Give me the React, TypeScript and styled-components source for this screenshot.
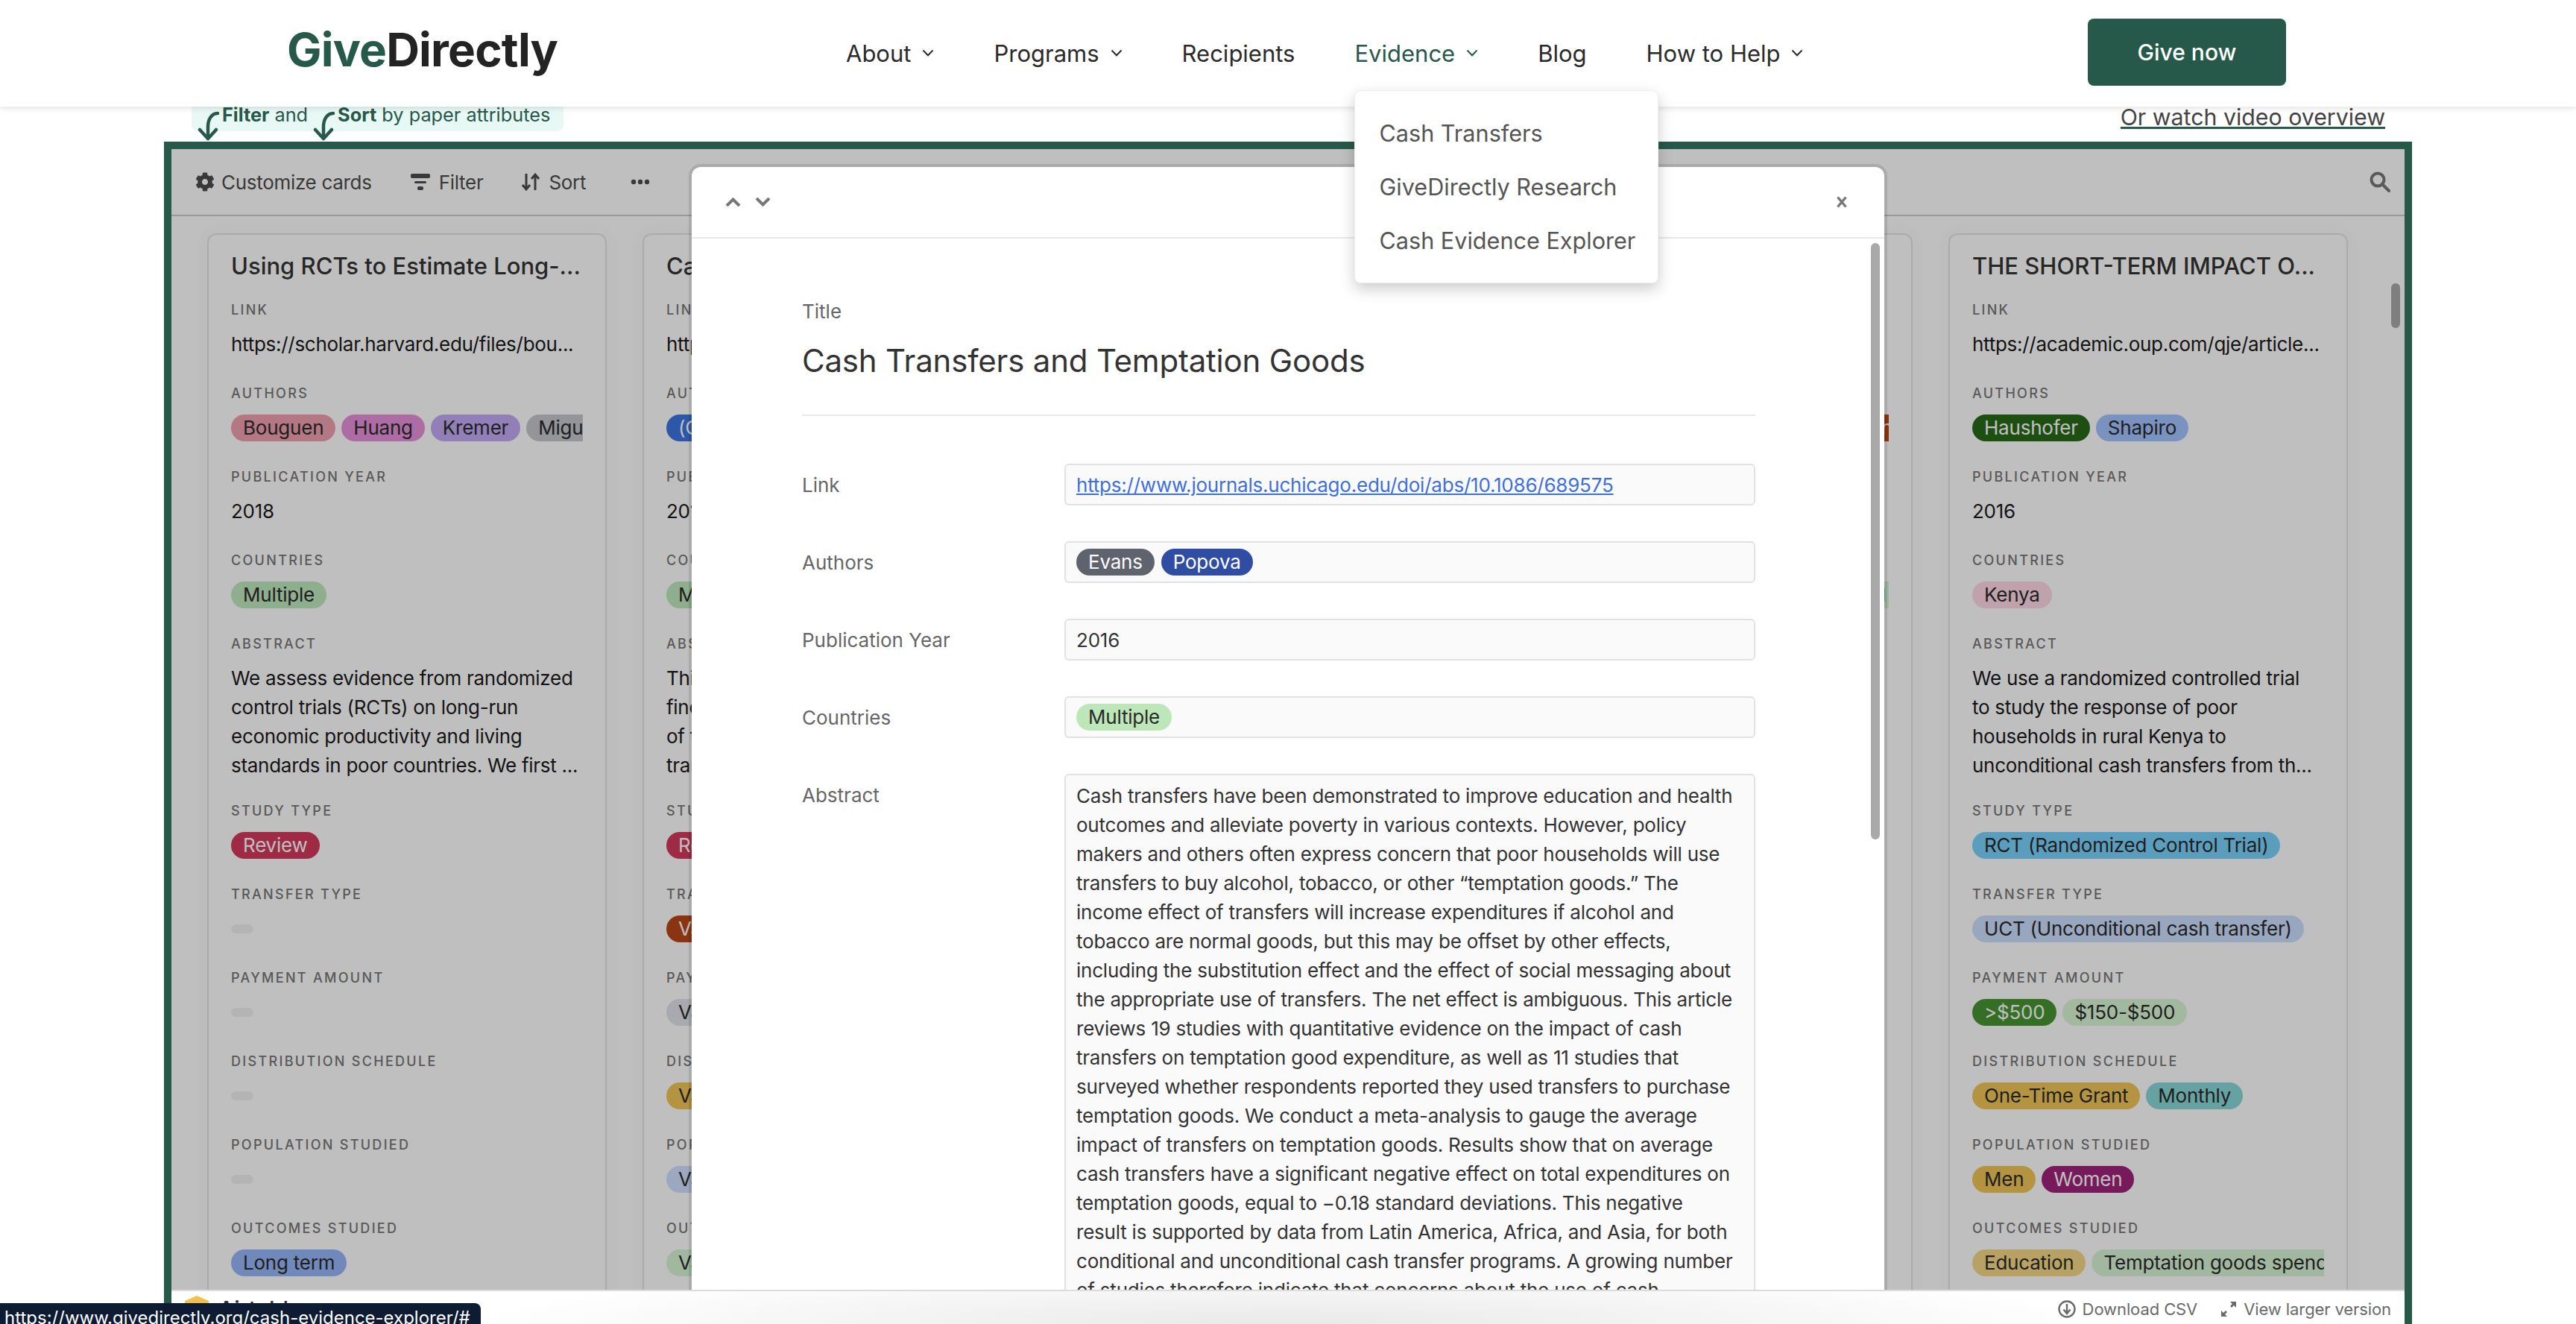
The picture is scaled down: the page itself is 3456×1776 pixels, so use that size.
import React from 'react'
import styled, { createGlobalStyle } from 'styled-components'
import { FaCog } from 'react-icons/fa'

const green = '#27594a'

const GlobalStyle = createGlobalStyle`
  html, body {
    margin: 0;
    overflow: hidden;
    background: #fff;
    font-family: Inter, "Liberation Sans", sans-serif;
  }
`

const Page = styled.div`
  width: 3456px;
  height: 1776px;
  display: flex;
  flex-direction: column;
  overflow: hidden;
  position: relative;
`

const Nav = styled.header`
  height: 143px;
  flex-shrink: 0;
  display: flex;
  align-items: center;
  padding: 0 389px 3px 385px;
  box-sizing: border-box;
  background: #fff;
  box-shadow: 0 2px 8px rgba(0, 0, 0, 0.12);
  position: relative;
  z-index: 10;
`

const Logo = styled.div`
  width: 360px;
  margin: -8px 390px 0 0;
  font-size: 62px;
  font-weight: 700;
  letter-spacing: -0.8px;
  color: #232323;
  white-space: nowrap;

  span {
    color: ${green};
  }
`

const Menu = styled.nav`
  display: flex;
  gap: 80px;
  margin-top: 2px;
`

const NavItem = styled.div<{ $active?: boolean }>`
  position: relative;
  display: flex;
  align-items: center;
  gap: 15px;
  height: 40px;
  font-size: 31px;
  color: ${(p) => (p.$active ? green : '#2b2b2b')};
  white-space: nowrap;
`

const GiveButton = styled.button`
  margin-left: auto;
  width: 266px;
  height: 90px;
  border: 0;
  border-radius: 8px;
  background: ${green};
  color: #fff;
  font-family: inherit;
  font-size: 30px;
  font-weight: 500;
`

const Dropdown = styled.div`
  position: absolute;
  left: 0;
  top: 70px;
  width: 408px;
  box-sizing: border-box;
  padding: 21px 32px 20px;
  background: #fff;
  border: 1px solid #eee;
  border-radius: 8px;
  box-shadow: 0 8px 20px rgba(0, 0, 0, 0.2);
`

const DropdownItem = styled.div`
  height: 72px;
  line-height: 72px;
  font-size: 30.6px;
  color: #555;
`

const Content = styled.main`
  flex: 1;
  min-height: 0;
  margin: 0 220px;
  display: flex;
  flex-direction: column;
`

const NoteRow = styled.div`
  height: 47px;
  flex-shrink: 0;
  display: flex;
  justify-content: space-between;
  padding: 0 36px 0 37px;
`

const Note = styled.div`
  height: 33px;
  width: 499px;
  box-sizing: border-box;
  padding-left: 41px;
  display: flex;
  align-items: flex-start;
  background: #e8f8f4;
  border-radius: 0 0 8px 8px;
  color: ${green};
  font-size: 25.3px;
  line-height: 22px;
  white-space: nowrap;

  b {
    font-weight: 700;
  }
`

const NoteArrow = styled.svg`
  width: 28px;
  height: 38px;
  margin: 7px 4px 0 -32px;
  flex-shrink: 0;
  overflow: visible;
`

const NoteText = styled.span<{ $wide?: boolean }>`
  margin-right: ${(p) => (p.$wide ? '40px' : '0')};
`

const VideoLink = styled.a`
  font-size: 30.3px;
  line-height: 29px;
  color: #444;
  border-bottom: 3px solid ${green};
  height: 27px;
`

const Frame = styled.section`
  flex: 1;
  min-height: 0;
  display: flex;
  flex-direction: column;
  border: 10px solid ${green};
  border-bottom: 0;
  background: #fff;
`

const Stage = styled.div`
  flex: 1;
  min-height: 0;
  position: relative;
  overflow: hidden;
`

const Toolbar = styled.div`
  height: 90px;
  box-sizing: border-box;
  display: flex;
  align-items: center;
  gap: 52px;
  padding: 0 19px 0 32px;
  border-bottom: 2px solid #ccc;
  color: #4d4d4d;
  font-size: 26px;
  letter-spacing: -0.3px;
`

const ToolButton = styled.div<{ $tight?: boolean }>`
  display: flex;
  align-items: center;
  gap: ${(p) => (p.$tight ? '9px' : '12px')};
`

const MoreButton = styled(ToolButton)`
  margin-left: 8px;
`

const SearchButton = styled.div`
  margin-left: auto;
  display: flex;
  color: #777;
`

const Board = styled.div`
  display: flex;
  gap: 48px;
  padding: 23px 48px 0;
`

const BoardScrollbar = styled.div`
  position: absolute;
  right: 6px;
  top: 180px;
  width: 12px;
  height: 60px;
  border-radius: 6px;
  background: #aaa;
`

const Card = styled.article`
  width: 536px;
  height: 1500px;
  flex-shrink: 0;
  box-sizing: border-box;
  padding: 22px 32px 0;
  background: #fff;
  border-radius: 12px;
  box-shadow: inset 0 0 0 2px rgba(0, 0, 0, 0.1), 0 0 24px rgba(0, 0, 0, 0.04);
`

const CardTitle = styled.h3`
  margin: 0 0 25px;
  font-size: 31px;
  line-height: 44px;
  font-weight: 500;
  color: #333;
  white-space: nowrap;
  overflow: hidden;
`

const Field = styled.div<{ $tall?: boolean }>`
  margin-bottom: ${(p) => (p.$tall ? '30px' : '35px')};
`

const FieldLabel = styled.div`
  height: 24px;
  line-height: 24px;
  margin-bottom: 14px;
  font-size: 18px;
  font-weight: 500;
  letter-spacing: 2.3px;
  text-transform: uppercase;
  color: #777;
  white-space: nowrap;
  overflow: hidden;
`

const FieldText = styled.div`
  font-size: 26px;
  line-height: 39px;
  letter-spacing: -0.28px;
  color: #1a1a1a;
  white-space: nowrap;
  overflow: hidden;
`

const PillRow = styled.div`
  height: 39px;
  display: flex;
  align-items: center;
  gap: 8px;
  overflow: hidden;
`

const Pill = styled.span<{ $bg: string; $light?: boolean }>`
  flex-shrink: 0;
  height: 36px;
  line-height: 36px;
  padding: 0 16px;
  border-radius: 18px;
  background: ${(p) => p.$bg};
  color: ${(p) => (p.$light ? '#fff' : '#2a2a2a')};
  font-size: 26px;
  letter-spacing: -0.22px;
  white-space: nowrap;
`

const EmptyPill = styled.span`
  width: 30px;
  height: 12px;
  border-radius: 6px;
  background: #f0f0f0;
`

const Overlay = styled.div`
  position: absolute;
  inset: 0;
  background: rgba(0, 0, 0, 0.25);
`

const Modal = styled.div`
  position: absolute;
  left: 698px;
  top: 24px;
  bottom: 0;
  width: 1600px;
  display: flex;
  flex-direction: column;
  background: #fff;
  border-radius: 12px 12px 0 0;
  box-shadow: 0 0 0 4px rgba(0, 0, 0, 0.11);
`

const ModalHeader = styled.div`
  height: 96px;
  flex-shrink: 0;
  box-sizing: border-box;
  display: flex;
  align-items: center;
  gap: 19px;
  padding: 0 50px 0 45px;
  border-bottom: 2px solid #e8e8e8;
  color: #777;
`

const CloseButton = styled.div`
  margin-left: auto;
  display: flex;
`

const ModalBody = styled.div`
  flex: 1;
  min-height: 0;
  overflow: hidden;
  padding: 82px 173px 0 148px;
`

const ModalScrollbar = styled.div`
  position: absolute;
  right: 6px;
  top: 102px;
  width: 12px;
  height: 800px;
  border-radius: 6px;
  background: #a9a9a9;
`

const TitleBlock = styled.div`
  padding-bottom: 44px;
  margin-bottom: 64px;
  border-bottom: 2px solid #e8e8e8;
`

const ModalLabel = styled.div`
  font-size: 26px;
  line-height: 32px;
  color: #666;
`

const ModalTitle = styled.h2`
  margin: 22px 0 0;
  font-size: 42px;
  line-height: 56px;
  letter-spacing: -0.2px;
  font-weight: 400;
  color: #333;
`

const ModalRow = styled.div`
  display: grid;
  grid-template-columns: 352px 927px;
  align-items: start;
  margin-bottom: 48px;
`

const RowLabel = styled(ModalLabel)`
  padding-top: 13px;
`

const ValueBox = styled.div`
  min-height: 56px;
  box-sizing: border-box;
  display: flex;
  align-items: center;
  gap: 9px;
  padding: 0 14px;
  background: #fafafa;
  border: 2px solid #e2e2e2;
  border-radius: 6px;
  font-size: 26px;
  letter-spacing: -0.22px;
  color: #333;
`

const LinkText = styled.a`
  color: #3e6fe0;
  text-decoration: underline;
`

const AbstractBox = styled(ValueBox)`
  display: block;
  padding: 8px 14px 12px;
  line-height: 39px;
`

const AbstractLine = styled.div`
  white-space: nowrap;
`

const Footer = styled.footer`
  height: 46px;
  flex-shrink: 0;
  box-sizing: border-box;
  display: flex;
  align-items: center;
  gap: 31px;
  padding: 3px 18px 0 17px;
  border-top: 2px solid #dcdcdc;
  background: radial-gradient(ellipse 1100px 80px at 50% 100%, #e9e9e9, #fff);
  color: #6a6a6a;
  font-size: 22px;
  letter-spacing: -0.1px;
`

const Brand = styled.div`
  margin-right: auto;
  display: flex;
  align-items: flex-start;
  gap: 12px;
  align-self: flex-start;
  padding-top: 3px;
  font-size: 30px;
  font-weight: 500;
  color: #333;
`

const FooterAction = styled.div`
  display: flex;
  align-items: center;
  gap: 9px;
`

const StatusBar = styled.div`
  position: absolute;
  left: 0;
  bottom: 0;
  z-index: 20;
  height: 28px;
  box-sizing: border-box;
  padding: 0 14px 0 6px;
  background: #0d1b33;
  border-radius: 0 8px 0 0;
  color: #fff;
  font-size: 24px;
  line-height: 40px;
  overflow: hidden;
  white-space: nowrap;
`

type Tag = { text: string; bg: string; light?: boolean }

type Paper = {
  title: string
  link: string
  authors: Tag[]
  year: string
  countries: Tag[]
  abstract: string[]
  study: Tag[]
  transfer: Tag[]
  payment: Tag[]
  schedule: Tag[]
  population: Tag[]
  outcomes: Tag[]
}

const multiple: Tag = { text: 'Multiple', bg: '#bee9bc' }
const review: Tag = { text: 'Review', bg: '#d3385c', light: true }

const papers: Paper[] = [
  {
    title: 'Using RCTs to Estimate Long-...',
    link: 'https://scholar.harvard.edu/files/bou...',
    authors: [
      { text: 'Bouguen', bg: '#f0a1b0' },
      { text: 'Huang', bg: '#e891dc' },
      { text: 'Kremer', bg: '#c3aaf5' },
      { text: 'Miguel', bg: '#c5c7cd' },
    ],
    year: '2018',
    countries: [multiple],
    abstract: [
      'We assess evidence from randomized',
      'control trials (RCTs) on long-run',
      'economic productivity and living',
      'standards in poor countries. We first ...',
    ],
    study: [review],
    transfer: [],
    payment: [],
    schedule: [],
    population: [],
    outcomes: [{ text: 'Long term', bg: '#97b7f9' }],
  },
  {
    title: 'Cash Transfers and Health...',
    link: 'https://www.nber.org/papers/...',
    authors: [{ text: '(Group)', bg: '#3c74e0', light: true }],
    year: '2019',
    countries: [multiple],
    abstract: ['This paper reviews the', 'findings of a wide range', 'of trials on the impact of', 'transfers ...'],
    study: [review],
    transfer: [{ text: 'Varies', bg: '#b84716', light: true }],
    payment: [{ text: 'Varies', bg: '#e0e3ea' }],
    schedule: [{ text: 'Varies', bg: '#f0c557' }],
    population: [{ text: 'Varies', bg: '#cfe0ff' }],
    outcomes: [{ text: 'Varies', bg: '#d6f6d5' }],
  },
  {
    title: 'Cash Transfers: What Does...',
    link: 'https://odi.org/en/publications/...',
    authors: [{ text: 'Bastagli', bg: '#f0a1b0' }],
    year: '2016',
    countries: [multiple],
    abstract: ['This report reviews the', 'evidence on the impact', 'of cash transfers on', 'individuals ...'],
    study: [review],
    transfer: [],
    payment: [],
    schedule: [],
    population: [],
    outcomes: [],
  },
  {
    title: 'Cash Transfers and Local...',
    link: 'https://www.aeaweb.org/articles...',
    authors: [
      { text: 'Angelucci', bg: '#c5c7cd' },
      { text: 'De Giorgi', bg: '#97b7f9' },
      { text: 'Attanasio and others', bg: '#b84716', light: true },
    ],
    year: '2015',
    countries: [{ text: 'Mexico, Nicaragua and Colombia and Peru', bg: '#d6f6d5' }],
    abstract: ['We use a large programme', 'to study spillovers across', 'households in villages', 'and markets ...'],
    study: [],
    transfer: [],
    payment: [],
    schedule: [],
    population: [],
    outcomes: [],
  },
  {
    title: 'THE SHORT-TERM IMPACT O...',
    link: 'https://academic.oup.com/qje/article...',
    authors: [
      { text: 'Haushofer', bg: '#286a18', light: true },
      { text: 'Shapiro', bg: '#a2c3ff' },
    ],
    year: '2016',
    countries: [{ text: 'Kenya', bg: '#ffd8e4' }],
    abstract: [
      'We use a randomized controlled trial',
      'to study the response of poor',
      'households in rural Kenya to',
      'unconditional cash transfers from th...',
    ],
    study: [{ text: 'RCT (Randomized Control Trial)', bg: '#7ad2fc' }],
    transfer: [{ text: 'UCT (Unconditional cash transfer)', bg: '#cbdffd' }],
    payment: [
      { text: '>$500', bg: '#479532', light: true },
      { text: '$150-$500', bg: '#d8f6d5' },
    ],
    schedule: [
      { text: 'One-Time Grant', bg: '#f0c557' },
      { text: 'Monthly', bg: '#88d8d8' },
    ],
    population: [
      { text: 'Men', bg: '#f0c557' },
      { text: 'Women', bg: '#9f237b', light: true },
    ],
    outcomes: [
      { text: 'Education', bg: '#f5d885' },
      { text: 'Temptation goods spending', bg: '#d8f5d5' },
    ],
  },
]

const abstractLines = [
  'Cash transfers have been demonstrated to improve education and health',
  'outcomes and alleviate poverty in various contexts. However, policy',
  'makers and others often express concern that poor households will use',
  'transfers to buy alcohol, tobacco, or other “temptation goods.” The',
  'income effect of transfers will increase expenditures if alcohol and',
  'tobacco are normal goods, but this may be offset by other effects,',
  'including the substitution effect and the effect of social messaging about',
  'the appropriate use of transfers. The net effect is ambiguous. This article',
  'reviews 19 studies with quantitative evidence on the impact of cash',
  'transfers on temptation good expenditure, as well as 11 studies that',
  'surveyed whether respondents reported they used transfers to purchase',
  'temptation goods. We conduct a meta-analysis to gauge the average',
  'impact of transfers on temptation goods. Results show that on average',
  'cash transfers have a significant negative effect on total expenditures on',
  'temptation goods, equal to −0.18 standard deviations. This negative',
  'result is supported by data from Latin America, Africa, and Asia, for both',
  'conditional and unconditional cash transfer programs. A growing number',
  'of studies therefore indicate that concerns about the use of cash',
]

const NavChevron = () => (
  <svg width="16" height="10" viewBox="0 0 16 10" fill="none" stroke="currentColor" strokeWidth="2">
    <path d="M1.5 1.5 8 8.2l6.5-6.7" />
  </svg>
)

const CurvedArrow = () => (
  <NoteArrow viewBox="0 0 28 38" fill="none" stroke={green} strokeWidth="4.5" strokeLinecap="round" strokeLinejoin="round">
    <path d="M26 2C18 2 13 10 13 20v14" />
    <path d="M2 24l11 12 11-12" />
  </NoteArrow>
)

const TagRow = ({ tags }: { tags: Tag[] }) => (
  <PillRow>
    {tags.length === 0 && <EmptyPill />}
    {tags.map((tag) => (
      <Pill key={tag.text} $bg={tag.bg} $light={tag.light}>
        {tag.text}
      </Pill>
    ))}
  </PillRow>
)

const TagField = ({ label, tags }: { label: string; tags: Tag[] }) => (
  <Field>
    <FieldLabel>{label}</FieldLabel>
    <TagRow tags={tags} />
  </Field>
)

const PaperCard = ({ paper }: { paper: Paper }) => (
  <Card>
    <CardTitle>{paper.title}</CardTitle>
    <Field>
      <FieldLabel>Link</FieldLabel>
      <FieldText>{paper.link}</FieldText>
    </Field>
    <TagField label="Authors" tags={paper.authors} />
    <Field>
      <FieldLabel>Publication Year</FieldLabel>
      <FieldText>{paper.year}</FieldText>
    </Field>
    <TagField label="Countries" tags={paper.countries} />
    <Field $tall>
      <FieldLabel>Abstract</FieldLabel>
      <FieldText>
        {paper.abstract.map((line) => (
          <div key={line}>{line}</div>
        ))}
      </FieldText>
    </Field>
    <TagField label="Study Type" tags={paper.study} />
    <TagField label="Transfer Type" tags={paper.transfer} />
    <TagField label="Payment Amount" tags={paper.payment} />
    <TagField label="Distribution Schedule" tags={paper.schedule} />
    <TagField label="Population Studied" tags={paper.population} />
    <TagField label="Outcomes Studied" tags={paper.outcomes} />
  </Card>
)

export default function App() {
  return (
    <Page>
      <GlobalStyle />
      <Nav>
        <Logo>
          <span>Give</span>Directly
        </Logo>
        <Menu>
          <NavItem>
            About <NavChevron />
          </NavItem>
          <NavItem>
            Programs <NavChevron />
          </NavItem>
          <NavItem>Recipients</NavItem>
          <NavItem $active>
            Evidence <NavChevron />
            <Dropdown>
              <DropdownItem>Cash Transfers</DropdownItem>
              <DropdownItem>GiveDirectly Research</DropdownItem>
              <DropdownItem>Cash Evidence Explorer</DropdownItem>
            </Dropdown>
          </NavItem>
          <NavItem>Blog</NavItem>
          <NavItem>
            How to Help <NavChevron />
          </NavItem>
        </Menu>
        <GiveButton>Give now</GiveButton>
      </Nav>

      <Content>
        <NoteRow>
          <Note>
            <CurvedArrow />
            <NoteText $wide>
              <b>Filter</b> and
            </NoteText>
            <CurvedArrow />
            <NoteText>
              <b>Sort</b> by paper attributes
            </NoteText>
          </Note>
          <VideoLink>Or watch video overview</VideoLink>
        </NoteRow>

        <Frame>
          <Stage>
            <Toolbar>
              <ToolButton $tight>
                <FaCog size={26} />
                Customize cards
              </ToolButton>
              <ToolButton>
                <svg width="26" height="26" viewBox="0 0 26 26" fill="currentColor">
                  <rect x="0" y="2" width="26" height="6" rx="2" />
                  <rect x="5" y="12" width="16" height="3" rx="1.5" />
                  <rect x="9" y="19" width="8" height="5" rx="2" />
                </svg>
                Filter
              </ToolButton>
              <ToolButton>
                <svg width="24" height="26" viewBox="0 0 24 26" fill="none" stroke="currentColor" strokeWidth="3">
                  <path d="M6 2v21M1 17l5 6 5-6" />
                  <path d="M18 24V3M13 9l5-6 5 6" />
                </svg>
                Sort
              </ToolButton>
              <MoreButton>
                <svg width="26" height="8" viewBox="0 0 26 8" fill="currentColor">
                  <circle cx="4" cy="4" r="3.2" />
                  <circle cx="13" cy="4" r="3.2" />
                  <circle cx="22" cy="4" r="3.2" />
                </svg>
              </MoreButton>
              <SearchButton>
                <svg width="28" height="28" viewBox="0 0 28 28" fill="none" stroke="currentColor" strokeWidth="4">
                  <circle cx="11" cy="11" r="8.5" />
                  <path d="M17 17l9 9" strokeLinecap="round" />
                </svg>
              </SearchButton>
            </Toolbar>
            <Board>
              {papers.map((paper) => (
                <PaperCard key={paper.title} paper={paper} />
              ))}
            </Board>
            <BoardScrollbar />
            <Overlay>
              <Modal>
                <ModalHeader>
                  <svg width="21" height="12" viewBox="0 0 21 12" fill="none" stroke="currentColor" strokeWidth="4">
                    <path d="M2 11l8.5-8.5L19 11" />
                  </svg>
                  <svg width="21" height="12" viewBox="0 0 21 12" fill="none" stroke="currentColor" strokeWidth="4">
                    <path d="M2 1l8.5 8.5L19 1" />
                  </svg>
                  <CloseButton>
                    <svg width="14" height="16" viewBox="0 0 14 16" fill="none" stroke="currentColor" strokeWidth="3.4">
                      <path d="M1.5 1.5l11 13M12.5 1.5l-11 13" />
                    </svg>
                  </CloseButton>
                </ModalHeader>
                <ModalBody>
                  <TitleBlock>
                    <ModalLabel>Title</ModalLabel>
                    <ModalTitle>Cash Transfers and Temptation Goods</ModalTitle>
                  </TitleBlock>
                  <ModalRow>
                    <RowLabel>Link</RowLabel>
                    <ValueBox>
                      <LinkText>https://www.journals.uchicago.edu/doi/abs/10.1086/689575</LinkText>
                    </ValueBox>
                  </ModalRow>
                  <ModalRow>
                    <RowLabel>Authors</RowLabel>
                    <ValueBox>
                      <Pill $bg="#5f636e" $light>Evans</Pill>
                      <Pill $bg="#2f4ea3" $light>Popova</Pill>
                    </ValueBox>
                  </ModalRow>
                  <ModalRow>
                    <RowLabel>Publication Year</RowLabel>
                    <ValueBox>2016</ValueBox>
                  </ModalRow>
                  <ModalRow>
                    <RowLabel>Countries</RowLabel>
                    <ValueBox>
                      <Pill $bg="#bde7b9">Multiple</Pill>
                    </ValueBox>
                  </ModalRow>
                  <ModalRow>
                    <RowLabel>Abstract</RowLabel>
                    <AbstractBox>
                      {abstractLines.map((line) => (
                        <AbstractLine key={line}>{line}</AbstractLine>
                      ))}
                    </AbstractBox>
                  </ModalRow>
                </ModalBody>
                <ModalScrollbar />
              </Modal>
            </Overlay>
          </Stage>
          <Footer>
            <Brand>
              <svg width="34" height="30" viewBox="0 0 34 30" fill="#f2c04f">
                <path d="M17 0l16 7v12L17 30 1 19V7z" />
              </svg>
              Airtable
            </Brand>
            <FooterAction>
              <svg width="24" height="24" viewBox="0 0 24 24" fill="none" stroke="currentColor" strokeWidth="2.4">
                <circle cx="12" cy="12" r="10.5" />
                <path d="M12 5v12M7.5 12.5 12 18l4.5-5.5" />
              </svg>
              Download CSV
            </FooterAction>
            <FooterAction>
              <svg width="22" height="22" viewBox="0 0 22 22" fill="currentColor">
                <path d="M13 1h8v8l-3-3-3 3-2-2 3-3zM9 21H1v-8l3 3 3-3 2 2-3 3z" />
              </svg>
              View larger version
            </FooterAction>
          </Footer>
        </Frame>
      </Content>
      <StatusBar>https://www.givedirectly.org/cash-evidence-explorer/#</StatusBar>
    </Page>
  )
}
